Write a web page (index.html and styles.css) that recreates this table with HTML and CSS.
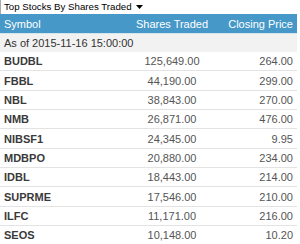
FILE: index.html
```html
<!DOCTYPE html>
<html>
<head>
<meta charset="utf-8">
<link rel="stylesheet" href="styles.css">
</head>
<body>
<div class="picker">
  <span class="picker-label">Top Stocks By Shares Traded</span>
  <svg class="picker-arrow" width="7" height="4" viewBox="0 0 7 4"><path d="M0 0H7L3.5 4Z" fill="#000"/></svg>
</div>
<table class="stocks">
  <thead>
    <tr class="head"><th class="c-sym">Symbol</th><th class="c-sh">Shares Traded</th><th class="c-px">Closing Price</th></tr>
  </thead>
  <tbody>
    <tr class="asof"><td colspan="3">As of 2015-11-16 15:00:00</td></tr>
    <tr><td class="c-sym">BUDBL</td><td class="c-sh">125,649.00</td><td class="c-px">264.00</td></tr>
    <tr><td class="c-sym">FBBL</td><td class="c-sh">44,190.00</td><td class="c-px">299.00</td></tr>
    <tr><td class="c-sym">NBL</td><td class="c-sh">38,843.00</td><td class="c-px">270.00</td></tr>
    <tr><td class="c-sym">NMB</td><td class="c-sh">26,871.00</td><td class="c-px">476.00</td></tr>
    <tr><td class="c-sym">NIBSF1</td><td class="c-sh">24,345.00</td><td class="c-px">9.95</td></tr>
    <tr><td class="c-sym">MDBPO</td><td class="c-sh">20,880.00</td><td class="c-px">234.00</td></tr>
    <tr><td class="c-sym">IDBL</td><td class="c-sh">18,443.00</td><td class="c-px">214.00</td></tr>
    <tr><td class="c-sym">SUPRME</td><td class="c-sh">17,546.00</td><td class="c-px">210.00</td></tr>
    <tr><td class="c-sym">ILFC</td><td class="c-sh">11,171.00</td><td class="c-px">216.00</td></tr>
    <tr><td class="c-sym">SEOS</td><td class="c-sh">10,148.00</td><td class="c-px">10.20</td></tr>
  </tbody>
</table>
</body>
</html>
```
FILE: styles.css
```css
html, body {
  margin: 0;
  padding: 0;
  background: #fff;
  font-family: "Liberation Sans", Arial, sans-serif;
  font-size: 11px;
}
.picker {
  width: 147px;
  height: 14px;
  box-sizing: border-box;
  border-left: 1px solid #a9a9a9;
  display: flex;
  align-items: center;
  padding-left: 3px;
  color: #000;
  font-size: 9.7px;
  white-space: nowrap;
}
.picker-label {
  flex: 1;
  min-width: 0;
  line-height: 14px;
}
.picker-arrow {
  flex-shrink: 0;
  margin-right: 4px;
}
.stocks {
  width: 297px;
  border-collapse: collapse;
  table-layout: fixed;
}
.stocks th, .stocks td {
  padding: 0 4px;
  white-space: nowrap;
}
.head th {
  background: #4698c8;
  color: #fff;
  font-weight: normal;
  height: 19px;
  border-bottom: 1px solid #d6e4ec;
  text-align: left;
}
.c-sym { width: 120px; }
.c-sh { width: 80px; }
.head th.c-sh { text-align: center; }
.head th.c-px { text-align: right; }
.asof td {
  background: #f2f2f2;
  color: #333;
  height: 18px;
}
tbody tr td {
  height: 18.35px;
  border-bottom: 1px solid #e3e3e3;
  color: #555;
}
tbody .asof td { border-bottom: none; }
td.c-sym {
  font-weight: bold;
  color: #3a3a3a;
}
td.c-sh { text-align: center; }
td.c-px { text-align: right; }
```
